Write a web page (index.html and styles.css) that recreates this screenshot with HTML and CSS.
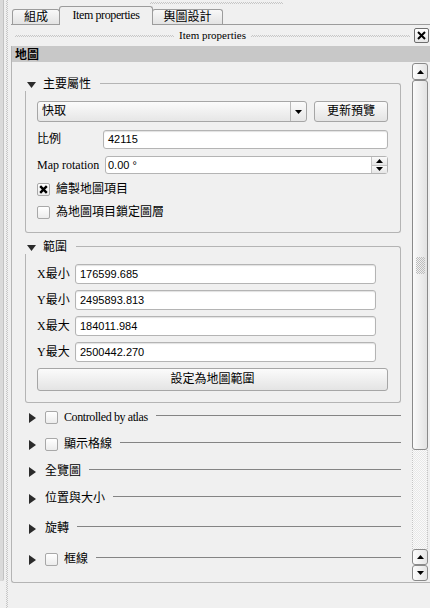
FILE: index.html
```html
<!DOCTYPE html>
<html>
<head>
<meta charset="utf-8">
<link rel="stylesheet" href="styles.css">
</head>
<body>
<div class="grip"><div class="grip-strip"></div><div class="grip-dots"></div></div>
<div class="main">
  <div class="topgrip"><div class="topdots"></div></div>
  <div class="tabbar">
    <div class="tab t1">組成</div>
    <div class="tab active">Item properties</div>
    <div class="tab t3">輿圖設計</div>
  </div>
  <div class="dtitle">
    <span class="dots"></span>
    <span class="dtext">Item properties</span>
    <span class="dots"></span>
    <span class="close"><svg width="9" height="9" viewBox="0 0 9 9"><path d="M1 1L8 8M8 1L1 8" stroke="#000" stroke-width="2"/></svg></span>
  </div>
  <div class="panel">
    <div class="phead">地圖</div>
    <div class="scroll">
      <div class="content">
        <div class="group g1">
          <div class="gtitle">
            <svg class="tri-down" width="9" height="6" viewBox="0 0 9 6"><path d="M0 0H9L4.5 6Z" fill="#2b2b2b"/></svg>
            <span class="gname">主要屬性</span>
            <span class="gline"></span>
          </div>
          <div class="gbody">
            <div class="row r-combo">
              <div class="combo"><span class="combo-text">快取</span><span class="combo-arrow"><svg width="7" height="4" viewBox="0 0 7 4"><path d="M0 0H7L3.5 4Z" fill="#000"/></svg></span></div>
              <div class="btn btn-upd">更新預覽</div>
            </div>
            <div class="row r-scale">
              <span class="lbl lbl-scale">比例</span>
              <div class="input in-scale">42115</div>
            </div>
            <div class="row r-rot">
              <span class="lbl lbl-rot">Map rotation</span>
              <div class="spin"><span class="spin-text">0.00 °</span>
                <span class="spin-btns">
                  <span class="spin-b"><svg width="7" height="4" viewBox="0 0 7 4"><path d="M0 4H7L3.5 0Z" fill="#000"/></svg></span>
                  <span class="spin-b"><svg width="7" height="4" viewBox="0 0 7 4"><path d="M0 0H7L3.5 4Z" fill="#000"/></svg></span>
                </span>
              </div>
            </div>
            <div class="row r-cb1">
              <span class="cb"><svg width="9" height="9" viewBox="0 0 9 9"><path d="M1.2 1.2L7.8 7.8M7.8 1.2L1.2 7.8" stroke="#000" stroke-width="2.4"/></svg></span>
              <span class="cb-text">繪製地圖項目</span>
            </div>
            <div class="row r-cb2">
              <span class="cb"></span>
              <span class="cb-text">為地圖項目鎖定圖層</span>
            </div>
          </div>
        </div>

        <div class="group g2">
          <div class="gtitle">
            <svg class="tri-down" width="9" height="6" viewBox="0 0 9 6"><path d="M0 0H9L4.5 6Z" fill="#2b2b2b"/></svg>
            <span class="gname">範圍</span>
            <span class="gline"></span>
          </div>
          <div class="gbody">
            <div class="row r-ext"><span class="lbl lbl-ext">X最小</span><div class="input in-ext">176599.685</div></div>
            <div class="row r-ext"><span class="lbl lbl-ext">Y最小</span><div class="input in-ext">2495893.813</div></div>
            <div class="row r-ext"><span class="lbl lbl-ext">X最大</span><div class="input in-ext">184011.984</div></div>
            <div class="row r-ext"><span class="lbl lbl-ext">Y最大</span><div class="input in-ext">2500442.270</div></div>
            <div class="btn btn-set">設定為地圖範圍</div>
          </div>
        </div>

        <div class="crow c1">
          <svg class="tri-right" width="7" height="10" viewBox="0 0 7 10"><path d="M0 0L7 5L0 10Z" fill="#2b2b2b"/></svg>
          <span class="cb cb-c"></span>
          <span class="ctext ctext-cb latin">Controlled by atlas</span>
          <span class="cline"></span>
        </div>
        <div class="crow c2">
          <svg class="tri-right" width="7" height="10" viewBox="0 0 7 10"><path d="M0 0L7 5L0 10Z" fill="#2b2b2b"/></svg>
          <span class="cb cb-c"></span>
          <span class="ctext ctext-cb">顯示格線</span>
          <span class="cline"></span>
        </div>
        <div class="crow c3">
          <svg class="tri-right" width="7" height="10" viewBox="0 0 7 10"><path d="M0 0L7 5L0 10Z" fill="#2b2b2b"/></svg>
          <span class="ctext">全覽圖</span>
          <span class="cline"></span>
        </div>
        <div class="crow c4">
          <svg class="tri-right" width="7" height="10" viewBox="0 0 7 10"><path d="M0 0L7 5L0 10Z" fill="#2b2b2b"/></svg>
          <span class="ctext">位置與大小</span>
          <span class="cline"></span>
        </div>
        <div class="crow c5">
          <svg class="tri-right" width="7" height="10" viewBox="0 0 7 10"><path d="M0 0L7 5L0 10Z" fill="#2b2b2b"/></svg>
          <span class="ctext">旋轉</span>
          <span class="cline"></span>
        </div>
        <div class="crow c6">
          <svg class="tri-right" width="7" height="10" viewBox="0 0 7 10"><path d="M0 0L7 5L0 10Z" fill="#2b2b2b"/></svg>
          <span class="cb cb-c"></span>
          <span class="ctext ctext-cb">框線</span>
          <span class="cline"></span>
        </div>
      </div>
      <div class="vbar">
        <div class="sbtn sb-top"><svg width="7" height="4" viewBox="0 0 7 4"><path d="M0 4H7L3.5 0Z" fill="#000"/></svg></div>
        <div class="thumb"><span class="thumb-grip"></span></div>
        <div class="track"></div>
        <div class="sbtn"><svg width="7" height="4" viewBox="0 0 7 4"><path d="M0 4H7L3.5 0Z" fill="#000"/></svg></div>
        <div class="sbtn"><svg width="7" height="4" viewBox="0 0 7 4"><path d="M0 0H7L3.5 4Z" fill="#000"/></svg></div>
      </div>
    </div>
  </div>
</div>
</body>
</html>
```

FILE: styles.css
```css
* { box-sizing: border-box; }
body {
  margin: 0;
  width: 430px;
  height: 608px;
  overflow: hidden;
  background: #f0f0f0;
  display: flex;
  font: 12px/13px "Liberation Serif", "Noto Sans CJK TC", serif;
  color: #000;
}
svg { display: block; }

/* left dock grip */
.grip { width: 11px; flex: none; display: flex; }
.grip-strip {
  width: 4px;
  height: 581px;
  background: #dadada;
  border-right: 1px solid #c2c2c2;
  border-bottom-right-radius: 2px;
}
.grip-dots {
  width: 2px;
  height: 100%;
  margin-left: 2px;
  background: repeating-conic-gradient(#c6c6c6 0 25%, transparent 0 50%) 0 0 / 2px 2px;
}

.main { width: 419px; flex: none; display: flex; flex-direction: column; }

.topgrip { height: 6px; padding-top: 2px; }
.topdots {
  margin-left: 139px;
  width: 133px;
  height: 2px;
  background: repeating-conic-gradient(#c6c6c6 0 25%, transparent 0 50%) 0 0 / 2px 2px;
}

/* tabs */
.tabbar {
  height: 19px;
  display: flex;
  align-items: flex-end;
  padding-left: 1px;
  border-bottom: 1px solid #9c9c9c;
}
.tab {
  height: 15px;
  border: 1px solid #9c9c9c;
  border-bottom: none;
  border-radius: 3px 3px 0 0;
  background: linear-gradient(#f8f8f8, #e3e3e3);
  display: flex;
  align-items: center;
  justify-content: center;
  font-size: 12px;
}
.t1 { width: 48px; }
.active {
  width: 94px;
  height: 19px;
  margin-left: -1px;
  margin-bottom: -1px;
  background: #f0f0f0;
  font-size: 12px;
  letter-spacing: -0.4px;
  padding-bottom: 1px;
  position: relative;
  z-index: 1;
}
.t3 { width: 71px; margin-left: -1px; }

/* dock title */
.dtitle {
  height: 21px;
  display: flex;
  align-items: center;
  padding: 0 1px 0 4px;
}
.dots {
  flex: 1;
  height: 2px;
  background: repeating-conic-gradient(#c6c6c6 0 25%, transparent 0 50%) 0 0 / 2px 2px;
}
.dtext { margin: 0 5px; font-size: 11px; }
.close {
  width: 15px;
  height: 15px;
  margin-left: 4px;
  border: 1px solid #6e6e6e;
  border-radius: 2px;
  background: linear-gradient(#ffffff, #e6e6e6);
  display: flex;
  align-items: center;
  justify-content: center;
}

/* panel */
.panel {
  width: 419px;
  border-left: 1px solid #b4b4b4;
  border-bottom: 1px solid #b4b4b4;
  border-bottom-left-radius: 3px;
}
.phead {
  height: 16px;
  background: #c8c8c8;
  font-weight: bold;
  padding-left: 3px;
  line-height: 16px;
  font-family: "Noto Sans CJK TC", sans-serif;
}
.scroll { height: 520px; display: flex; }
.content { width: 400px; overflow: hidden; }

/* group boxes */
.group { margin: 0 11px 0 13px; }
.g1 { margin-top: 16px; }
.g2 { margin-top: 8px; }
.gtitle { height: 13px; display: flex; align-items: center; }
.tri-down { margin-left: 2px; }
.gname { margin-left: 7px; }
.gline {
  flex: 1;
  align-self: stretch;
  margin-left: 9px;
  margin-top: 5px;
  border-top: 1px solid #b4b4b4;
  border-right: 1px solid #b4b4b4;
  border-top-right-radius: 3px;
}
.gbody {
  border: 1px solid #b4b4b4;
  border-top: none;
  border-radius: 0 0 3px 3px;
  padding: 10px 12px 13px 11px;
}
.g2 .gbody { padding-bottom: 11px; }

.row { display: flex; align-items: center; }
.r-scale { margin-top: 8px; }
.r-rot { margin-top: 7px; }
.r-cb1 { margin-top: 9px; height: 13px; }
.r-cb2 { margin-top: 10px; height: 13px; }
.r-ext { margin-bottom: 6px; }

.combo {
  width: 270px;
  height: 21px;
  border: 1px solid #a6a6a6;
  border-radius: 3px;
  background: linear-gradient(#fbfbfb, #e6e6e6);
  display: flex;
  align-items: center;
}
.combo-text { flex: 1; padding-left: 4px; }
.combo-arrow {
  width: 16px;
  height: 100%;
  border-left: 1px solid #b8b8b8;
  display: flex;
  align-items: center;
  justify-content: center;
}
.btn {
  height: 21px;
  border: 1px solid #a6a6a6;
  border-radius: 3px;
  background: linear-gradient(#fbfbfb, #e4e4e4);
  display: flex;
  align-items: center;
  justify-content: center;
}
.btn-upd { width: 74px; margin-left: 7px; }
.btn-set { height: 23px; }

.lbl { flex: none; }
.lbl-scale { width: 66px; }
.lbl-rot { width: 68px; }
.lbl-ext { width: 38px; }

.input {
  height: 19px;
  background: #fff;
  border: 1px solid #b4b4b4;
  border-radius: 3px;
  box-shadow: inset 0 1px 1px #e2e2e2;
  font: 11px/17px "Liberation Sans", sans-serif;
  padding-left: 4px;
}
.in-scale { width: 285px; }
.in-ext { width: 301px; height: 20px; line-height: 18px; }

.spin {
  width: 283px;
  height: 18px;
  background: #fff;
  border: 1px solid #b4b4b4;
  border-radius: 3px;
  display: flex;
  font: 11px/16px "Liberation Sans", sans-serif;
}
.spin-text { flex: 1; padding-left: 2px; }
.spin-btns { width: 16px; display: flex; flex-direction: column; border-left: 1px solid #c4c4c4; }
.spin-b {
  flex: 1;
  display: flex;
  align-items: center;
  justify-content: center;
  background: linear-gradient(#fafafa, #e6e6e6);
}
.spin-b + .spin-b { border-top: 1px solid #c4c4c4; }

.cb {
  width: 13px;
  height: 13px;
  flex: none;
  border: 1px solid #a8a8a8;
  border-radius: 2px;
  background: linear-gradient(#ffffff, #ececec);
  display: flex;
  align-items: center;
  justify-content: center;
}
.cb-text { margin-left: 6px; }

/* collapsed groups */
.crow {
  height: 13px;
  display: flex;
  align-items: center;
  margin: 0 11px 0 17px;
}
.c1 { margin-top: 8px; }
.c2, .c3, .c4 { margin-top: 14px; }
.c5 { margin-top: 17px; }
.c6 { margin-top: 18px; }
.cb-c { margin-left: 9px; }
.ctext { margin-left: 9px; }
.ctext-cb { margin-left: 6px; }
.latin { font-size: 12px; letter-spacing: -0.4px; }
.cline {
  flex: 1;
  align-self: flex-start;
  margin-top: 4px;
  margin-left: 8px;
  border-top: 1px solid #848484;
}

/* scrollbar */
.vbar { width: 16px; padding: 1px 0; display: flex; flex-direction: column; }
.sbtn {
  height: 16px;
  flex: none;
  border: 1px solid #8a8a8a;
  border-radius: 3px;
  background: linear-gradient(90deg, #fdfdfd, #e4e4e4);
  display: flex;
  align-items: center;
  justify-content: center;
}
.sb-top { height: 17px; }
.thumb {
  height: 370px;
  flex: none;
  border: 1px solid #8a8a8a;
  border-radius: 3px;
  background: linear-gradient(90deg, #fbfbfb, #e2e2e2);
  display: flex;
  align-items: center;
  justify-content: center;
}
.thumb-grip {
  width: 9px;
  height: 17px;
  background: repeating-conic-gradient(#bdbdbd 0 25%, transparent 0 50%) 0 0 / 2px 2px;
}
.track {
  flex: 1;
  border-left: 1px dotted #c4c4c4;
  border-right: 1px dotted #c4c4c4;
  background: repeating-conic-gradient(#e8e8e8 0 25%, #fafafa 0 50%) 0 0 / 2px 2px;
}
```
